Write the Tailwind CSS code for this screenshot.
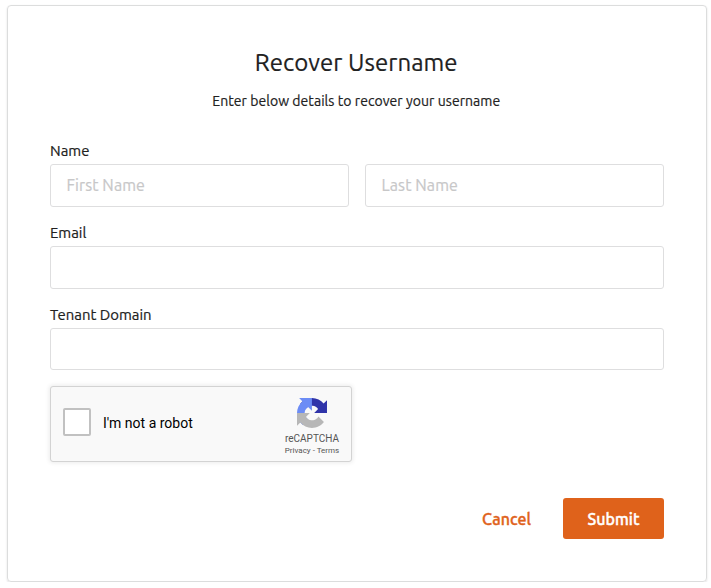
<!DOCTYPE html>
<html lang="en">
<head>
<meta charset="utf-8">
<title>Recover Username</title>
<script src="https://cdn.jsdelivr.net/npm/@tailwindcss/browser@4"></script>
</head>
<body class="bg-white font-['Ubuntu','Noto_Sans',sans-serif] text-[#212121] overflow-hidden">
<main class="ml-[7px] mt-[5px] w-[700px] h-[577px] rounded-[4px] border border-[#dcdddd] shadow-[0_1px_2px_rgba(34,36,38,0.15)] px-[42px] pt-[40px]">
  <h1 class="pr-[1.500px] text-center text-[24px] leading-[34px] tracking-[0.06px] whitespace-nowrap [-webkit-text-stroke:0.2px]">Recover Username</h1>
  <p class="mt-[11px] pr-[1.500px] text-center text-[14px] leading-[20px] tracking-[0.06px] whitespace-nowrap [-webkit-text-stroke:0.2px]">Enter below details to recover your username</p>
  <form>
    <div class="mt-[30px]">
      <label class="block h-[23px] text-[14.9px] leading-[20px] [-webkit-text-stroke:0.2px]">Name</label>
      <div class="grid grid-cols-2 gap-4">
        <input class="h-[43px] min-w-0 rounded-[3px] border border-[#dededf] px-[15.500px] pb-px text-[16px] tracking-[0.1px] placeholder:text-[#c7c7c8] [-webkit-text-stroke:0.2px]" placeholder="First Name">
        <input class="h-[43px] min-w-0 rounded-[3px] border border-[#dededf] px-[15.500px] pb-px text-[16px] tracking-[0.1px] placeholder:text-[#c7c7c8] [-webkit-text-stroke:0.2px]" placeholder="Last Name">
      </div>
    </div>
    <div class="mt-[16px]">
      <label class="block h-[23px] text-[14.9px] leading-[20px] [-webkit-text-stroke:0.2px]">Email</label>
      <input class="block h-[43px] w-full rounded-[3px] border border-[#dededf] px-4">
    </div>
    <div class="mt-[16px]">
      <label class="block h-[23px] text-[14.9px] leading-[20px] [-webkit-text-stroke:0.2px]">Tenant Domain</label>
      <input class="block h-[42px] w-full rounded-[3px] border border-[#dededf] px-4">
    </div>
    <div class="mt-[16px] flex h-[76px] w-[302px] items-start rounded-[3px] border border-[#d3d3d3] bg-[#f9f9f9] pl-[12px] font-[Roboto,sans-serif] text-black shadow-[0_0_4px_1px_rgba(0,0,0,0.08)]">
      <div class="mt-[21px] size-[28px] shrink-0 rounded-[2px] border-2 border-[#c1c1c1] bg-white"></div>
      <span class="ml-[12px] mt-[28px] text-[14px] leading-[17px] whitespace-nowrap">I'm not a robot</span>
      <div class="ml-auto mr-[9px] mt-[11px] flex w-[60px] flex-col items-center text-[#555]">
        <svg class="size-[30px]" viewBox="0 0 64 64">
          <path fill="#3034a9" d="M64 31.955l-.033-1.370V4.687l-7.160 7.160C50.948 4.674 42.033.093 32.050.093c-10.400 0-19.622 4.960-25.458 12.640l11.736 11.860a15.550 15.550 0 0 1 4.754-5.334c2.050-1.600 4.952-2.906 8.968-2.906.485 0 .860.057 1.135.163 4.976.393 9.288 3.140 11.828 7.124l-8.307 8.307z"/>
          <path fill="#6c8cf5" d="M31.862.094l-1.370.033H4.594l7.160 7.160C4.580 13.147 0 22.060 0 32.046c0 10.400 4.960 19.622 12.640 25.458L24.500 45.768a15.550 15.550 0 0 1-5.334-4.754c-1.600-2.050-2.906-4.952-2.906-8.968 0-.485.057-.860.163-1.135.393-4.976 3.140-9.288 7.124-11.828l8.307 8.307z"/>
          <path fill="#b7b7b7" d="M0 32.045l.033 1.370v25.898l7.160-7.160c5.860 7.173 14.774 11.754 24.760 11.754 10.400 0 19.622-4.960 25.458-12.640l-11.736-11.860a15.550 15.550 0 0 1-4.754 5.334c-2.050 1.600-4.952 2.906-8.968 2.906-.485 0-.860-.057-1.135-.163-4.976-.393-9.288-3.140-11.828-7.124l8.307-8.307z"/>
        </svg>
        <span class="mt-[5px] text-[10px] leading-[12px]">reCAPTCHA</span>
        <span class="text-[8px] leading-[11px] whitespace-nowrap">Privacy - Terms</span>
      </div>
    </div>
    <div class="mt-[36px] flex items-center justify-end">
      <button type="button" class="mr-[32px] text-[16px] leading-[20px] font-medium tracking-[0.05px] text-[#df621b] [-webkit-text-stroke:0.4px]">Cancel</button>
      <button type="button" class="h-[41px] w-[101px] rounded-[3px] bg-[#df621b] text-[16px] font-medium tracking-[0.05px] text-white [-webkit-text-stroke:0.4px]">Submit</button>
    </div>
  </form>
</main>
</body>
</html>
